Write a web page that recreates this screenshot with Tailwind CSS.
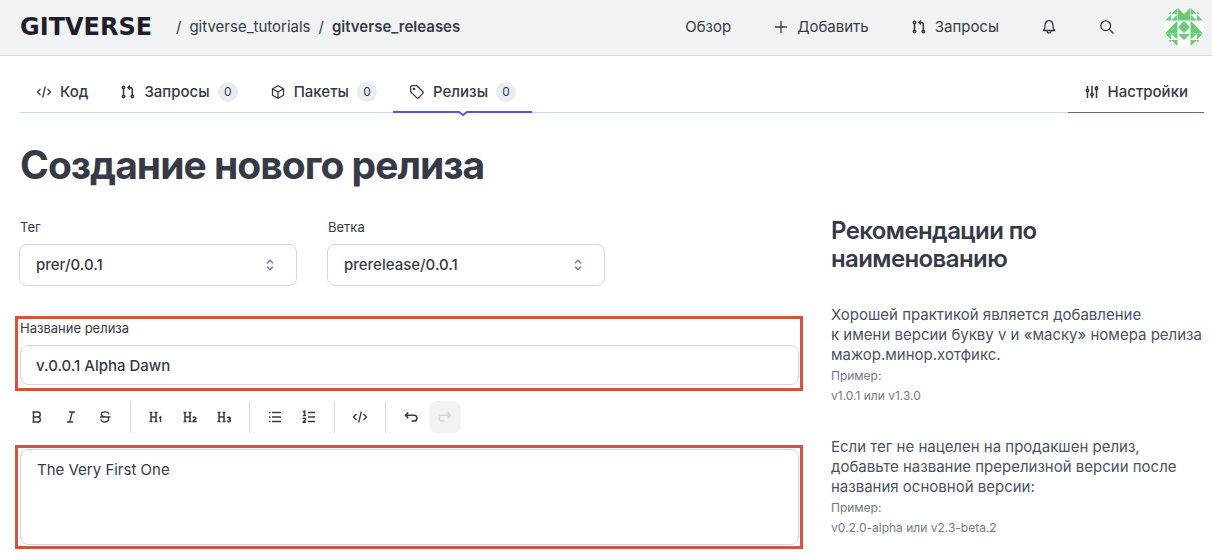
<!DOCTYPE html>
<html lang="ru">
<head>
<meta charset="utf-8">
<meta name="viewport" content="width=device-width, initial-scale=1">
<title>Создание нового релиза</title>
<script src="https://cdn.jsdelivr.net/npm/@tailwindcss/browser@4"></script>
</head>
<body class="bg-white font-['Inter',sans-serif] text-[15px] leading-5 text-[#363a47]">

<svg class="hidden" aria-hidden="true">
  <symbol id="code" viewBox="0 0 16 16"><path d="M4.500 5 1.500 8l3 3M11.500 5l3 3-3 3M9.300 2.500 6.700 13.500"/></symbol>
  <symbol id="pull" viewBox="0 0 16 16"><circle cx="3.500" cy="3.500" r="1.200"/><circle cx="3.500" cy="12.500" r="1.200"/><circle cx="12.300" cy="12.500" r="1.200"/><path d="M3.500 4.500v7M12.300 11.500V5.500q0-2-2-2H8M10 1.500l-2 2 2 2"/></symbol>
</svg>

<header class="flex h-14 items-center justify-between border-b border-[#d0d7de] bg-[#f1f2f4] pr-2 pb-0.5 pl-5">
  <nav class="flex items-center gap-2" aria-label="Путь">
    <a href="#" class="w-[148px] font-['DejaVu_Sans',sans-serif] text-2xl leading-6 font-bold text-[#1d1f28]">GITVERSE</a>
    <span>/</span>
    <a href="#">gitverse_tutorials</a>
    <span>/</span>
    <a href="#" class="font-semibold">gitverse_releases</a>
  </nav>
  <nav class="flex items-center" aria-label="Главное меню">
    <a href="#" class="mr-[42px]">Обзор</a>
    <a href="#" class="mr-[42px] flex items-center gap-2">
      <svg class="size-4 fill-none stroke-current" viewBox="0 0 16 16" stroke-width="1.300"><path d="M8 2v12M2 8h12"/></svg>Добавить</a>
    <a href="#" class="mr-[42px] flex items-center gap-2">
      <svg class="size-4 fill-none stroke-current" stroke-width="1.500"><use href="#pull"/></svg>Запросы</a>
    <button class="mr-[42px]" aria-label="Уведомления">
      <svg class="block size-4 fill-none stroke-current" viewBox="0 0 16 16" stroke-width="1.300" stroke-linejoin="round"><path d="M2.500 11.500c1-1 1.500-2 1.500-4.500C4 3.500 6 1.700 8 1.700S12 3.500 12 7c0 2.500.5 3.500 1.500 4.500zM6 11.700c0 3 4 3 4 0"/></svg>
    </button>
    <button class="mr-[49px]" aria-label="Поиск">
      <svg class="block size-4 fill-none stroke-current" viewBox="0 0 16 16" stroke-width="1.300"><circle cx="6.700" cy="6.700" r="4.900"/><path d="m10.200 10.200 4.300 4.300"/></svg>
    </button>
    <a href="#" aria-label="Профиль" class="block size-10 overflow-hidden rounded-full bg-white">
      <svg class="size-10" viewBox="0 0 40 40" fill="#67cc75">
        <path d="M14 1l6 6 6-6v12.500H14zM1 26.500l12.500-13v13zM39 26.500l-12.500-13v13zM20 14l6 6-6 6-6-6zM14 27h12l-6 6z"/>
        <path id="q" d="M13.500 1v6H7zM7 1v6H1zM7 7.500v6H1zM13.500 7.500v6H7z"/>
        <use href="#q" transform="matrix(-1 0 0 1 40 0)"/>
        <use href="#q" transform="matrix(1 0 0 -1 0 40)"/>
        <use href="#q" transform="matrix(-1 0 0 -1 40 40)"/>
      </svg>
    </a>
  </nav>
</header>

<nav class="mr-2 ml-5 flex h-[57px] justify-between border-b border-[#d0d7de] pt-4 font-medium" aria-label="Репозиторий">
  <div class="flex">
    <a href="#" class="flex h-10 items-center gap-2 px-4"><svg class="size-4 fill-none stroke-current" stroke-width="1.300"><use href="#code"/></svg>Код</a>
    <a href="#" class="flex h-10 items-center gap-2 px-4"><svg class="size-4 fill-none stroke-current" stroke-width="1.500"><use href="#pull"/></svg>Запросы<span class="flex size-5 items-center justify-center rounded-full bg-[#e9ecf0] text-xs font-normal">0</span></a>
    <a href="#" class="flex h-10 items-center gap-2 px-4"><svg class="size-4 fill-none stroke-current" viewBox="0 0 16 16" stroke-width="1.300" stroke-linejoin="round"><path d="m8 1.700 5.500 3.100v6.400L8 14.300l-5.500-3.100V4.800zM2.500 4.800 8 8l5.500-3.200M8 8v6.300"/></svg>Пакеты<span class="flex size-5 items-center justify-center rounded-full bg-[#e9ecf0] text-xs font-normal">0</span></a>
    <a href="#" class="relative flex h-10 items-center gap-2 px-4" aria-current="page"><svg class="size-4 fill-none stroke-current" viewBox="0 0 16 16" stroke-width="1.300" stroke-linejoin="round"><path d="M1.700 3.200q0-1.500 1.500-1.500h4.600l6.100 6.100q.8.800 0 1.600l-4.500 4.500q-.8.800-1.600 0L1.700 7.800z"/><circle cx="5" cy="5" r=".7" fill="currentColor"/></svg>Релизы<span class="flex size-5 items-center justify-center rounded-full bg-[#e9ecf0] text-xs font-normal">0</span>
      <span class="absolute inset-x-0 -bottom-[5px] flex h-[6px]">
        <span class="h-[2px] flex-1 bg-[#5558d9]"></span>
        <svg class="h-[6px] w-3 fill-white stroke-[#5558d9]" viewBox="0 0 12 6" stroke-width="2"><path d="M0 1h2l4 3 4-3h2"/></svg>
        <span class="h-[2px] flex-1 bg-[#5558d9]"></span>
      </span>
    </a>
  </div>
  <a href="#" class="flex h-[41px] items-center gap-2 border-b border-[#636c7e] px-4"><svg class="size-4 fill-none stroke-current" viewBox="0 0 16 16" stroke-width="1.500"><path d="M3.500 2v3M3.500 8v6M8 2v7M8 12v2M12.500 2v1M12.500 6v8"/><circle cx="3.500" cy="6.500" r="1.200"/><circle cx="8" cy="10.500" r="1.200"/><circle cx="12.500" cy="4.500" r="1.200"/></svg>Настройки</a>
</nav>

<main class="pr-2 pb-2 pl-[15px]">
  <h1 class="pt-7 pl-[5px] text-[39px] leading-12 font-bold tracking-tight">Создание нового релиза</h1>
  <div class="grid grid-cols-[minmax(0,788fr)_minmax(0,373fr)] gap-7 pt-7">
    <form>
      <div class="flex gap-[30px] pl-1">
        <div class="w-[278px]">
          <label for="tag" class="block pb-[7px] pl-px text-[13px]">Тег</label>
          <div class="relative">
            <select id="tag" class="block h-[42px] w-full appearance-none rounded-lg border border-[#d0d7de] bg-white px-4 font-medium"><option>prer/0.0.1</option></select>
            <svg class="pointer-events-none absolute top-[13px] right-[19px] size-4 fill-none stroke-[#71809a]" viewBox="0 0 16 16" stroke-width="1.500"><path d="m5 6.300 3-3 3 3M5 9.700l3 3 3-3"/></svg>
          </div>
        </div>
        <div class="w-[278px]">
          <label for="branch" class="block pb-[7px] pl-px text-[13px]">Ветка</label>
          <div class="relative">
            <select id="branch" class="block h-[42px] w-full appearance-none rounded-lg border border-[#d0d7de] bg-white px-4 font-medium"><option>prerelease/0.0.1</option></select>
            <svg class="pointer-events-none absolute top-[13px] right-[19px] size-4 fill-none stroke-[#71809a]" viewBox="0 0 16 16" stroke-width="1.500"><path d="m5 6.300 3-3 3 3M5 9.700l3 3 3-3"/></svg>
          </div>
        </div>
      </div>

      <div class="mt-[30px] border-3 border-[#d65145] pr-px pb-[3px] pl-0.5">
        <label for="name" class="block pb-2 text-[13px] leading-[18px]">Название релиза</label>
        <input id="name" value="v.0.0.1 Alpha Dawn" class="block h-10 w-full rounded-lg border border-[#d0d7de] px-[15px] font-medium">
      </div>

      <div class="mt-2.5 mb-3 flex h-8 items-stretch gap-0.5 pl-1.5" role="toolbar" aria-label="Форматирование">
        <button type="button" aria-label="Полужирный" class="grid w-8 place-items-center"><svg class="size-4 fill-none stroke-current" viewBox="0 0 16 16" stroke-width="1.500"><path d="M4.500 3v10h5a2.600 2.600 0 0 0 0-5h-5 4.200a2.500 2.500 0 0 0 0-5zM3.500 3h1M3.500 13h1"/></svg></button>
        <button type="button" aria-label="Курсив" class="grid w-8 place-items-center"><svg class="size-4 fill-none stroke-current" viewBox="0 0 16 16" stroke-width="1.300"><path d="M6 3h6M4 13h6M9.300 3 6.700 13"/></svg></button>
        <button type="button" aria-label="Зачёркнутый" class="grid w-8 place-items-center"><svg class="size-4 fill-none stroke-current" viewBox="0 0 16 16" stroke-width="1.300"><path d="M12 5.300C11.500 2 4.300 2 4.300 5.300c0 1.500 1.500 2.300 3.700 2.700M3 8h10.500M11 8.500c2 2-.2 4.500-3 4.500-2.500 0-4-1-4-2.800"/></svg></button>
        <span class="mx-[7px] w-px bg-[#d0d7de]"></span>
        <button type="button" aria-label="Заголовок 1" class="grid w-8 place-items-center"><svg class="size-4 fill-none stroke-current" viewBox="0 0 16 16" stroke-width="1.500"><path d="M3 3.500v9M8 3.500v9M3 8h5M1.500 3.500h3M6.500 3.500h3M1.500 12.500h3M6.500 12.500h3M11 9l1.500-1v5"/></svg></button>
        <button type="button" aria-label="Заголовок 2" class="grid w-8 place-items-center"><svg class="size-4 fill-none stroke-current" viewBox="0 0 16 16" stroke-width="1.500"><path d="M3 3.500v9M8 3.500v9M3 8h5M1.500 3.500h3M6.500 3.500h3M1.500 12.500h3M6.500 12.500h3M11 9c.3-1.200 3-1.200 3 .2 0 1.200-3 1.800-3 3.200h3.700"/></svg></button>
        <button type="button" aria-label="Заголовок 3" class="grid w-8 place-items-center"><svg class="size-4 fill-none stroke-current" viewBox="0 0 16 16" stroke-width="1.500"><path d="M3 3.500v9M8 3.500v9M3 8h5M1.500 3.500h3M6.500 3.500h3M1.500 12.500h3M6.500 12.500h3M11 8.800c.8-1 3.300-.8 3.300.5 0 .8-1 1-2 1 1 0 2.200.2 2.200 1.200 0 1.400-2.800 1.500-3.700.4"/></svg></button>
        <span class="mx-[7px] w-px bg-[#d0d7de]"></span>
        <button type="button" aria-label="Маркированный список" class="grid w-8 place-items-center"><svg class="size-4 fill-none stroke-current" viewBox="0 0 16 16" stroke-width="1.300"><path d="M5 3.500h9M5 8h9M5 12.500h9M2 3.500h1.500M2 8h1.500M2 12.500h1.500"/></svg></button>
        <button type="button" aria-label="Нумерованный список" class="grid w-8 place-items-center"><svg class="size-4 fill-none stroke-current" viewBox="0 0 16 16" stroke-width="1.300"><path d="M7 3.500h7M7 8h7M7 12.500h7"/><path stroke-width="1.500" d="m2 3.200 1.600-1v4.500M2 6.500h3.200M2 10c.3-1.300 2.800-1 2.800.3 0 1.200-2.600 2-2.600 3h3"/></svg></button>
        <span class="mx-[7px] w-px bg-[#d0d7de]"></span>
        <button type="button" aria-label="Код" class="grid w-8 place-items-center"><svg class="size-4 fill-none stroke-current" stroke-width="1.300"><use href="#code"/></svg></button>
        <span class="mx-[7px] w-px bg-[#d0d7de]"></span>
        <button type="button" aria-label="Отменить" class="grid w-8 place-items-center"><svg class="size-4 fill-none stroke-current" viewBox="0 0 16 16" stroke-width="1.500"><path d="M5.300 3.500 2.500 6.300l2.800 2.800M2.500 6.300h8.500a2.900 2.900 0 0 1 0 5.800H8.500"/></svg></button>
        <button type="button" aria-label="Повторить" disabled class="grid w-8 place-items-center rounded-lg bg-[#f1f2f4] text-[#d0d7de]"><svg class="size-4 fill-none stroke-current" viewBox="0 0 16 16" stroke-width="1.500"><path d="m10.700 3.500 2.800 2.800-2.800 2.800M13.500 6.300H5a2.900 2.900 0 0 0 0 5.800h2.500"/></svg></button>
      </div>

      <div class="border-3 border-[#d65145] py-px pr-px pl-0.5">
        <textarea aria-label="Описание релиза" class="block h-24 w-full resize-none rounded-lg border border-[#d0d7de] px-4 py-2.5">The Very First One</textarea>
      </div>
    </form>

    <aside class="text-[#4b5263]">
      <h2 class="text-2xl leading-7 font-semibold tracking-tight text-[#363a47]">Рекомендации по наименованию</h2>
      <p class="mt-8">Хорошей практикой является добавление к&nbsp;имени версии букву v и «маску» номера релиза мажор.минор.хотфикс.</p>
      <p class="mt-px text-xs leading-5 text-[#71798a]">Пример:<br>v1.0.1 или v1.3.0</p>
      <p class="mt-[31px]">Если тег не нацелен на продакшен релиз, добавьте название пререлизной версии после названия основной версии:</p>
      <p class="mt-px text-xs leading-5 text-[#71798a]">Пример:<br>v0.2.0-alpha или v2.3-beta.2</p>
    </aside>
  </div>
</main>
</body>
</html>
